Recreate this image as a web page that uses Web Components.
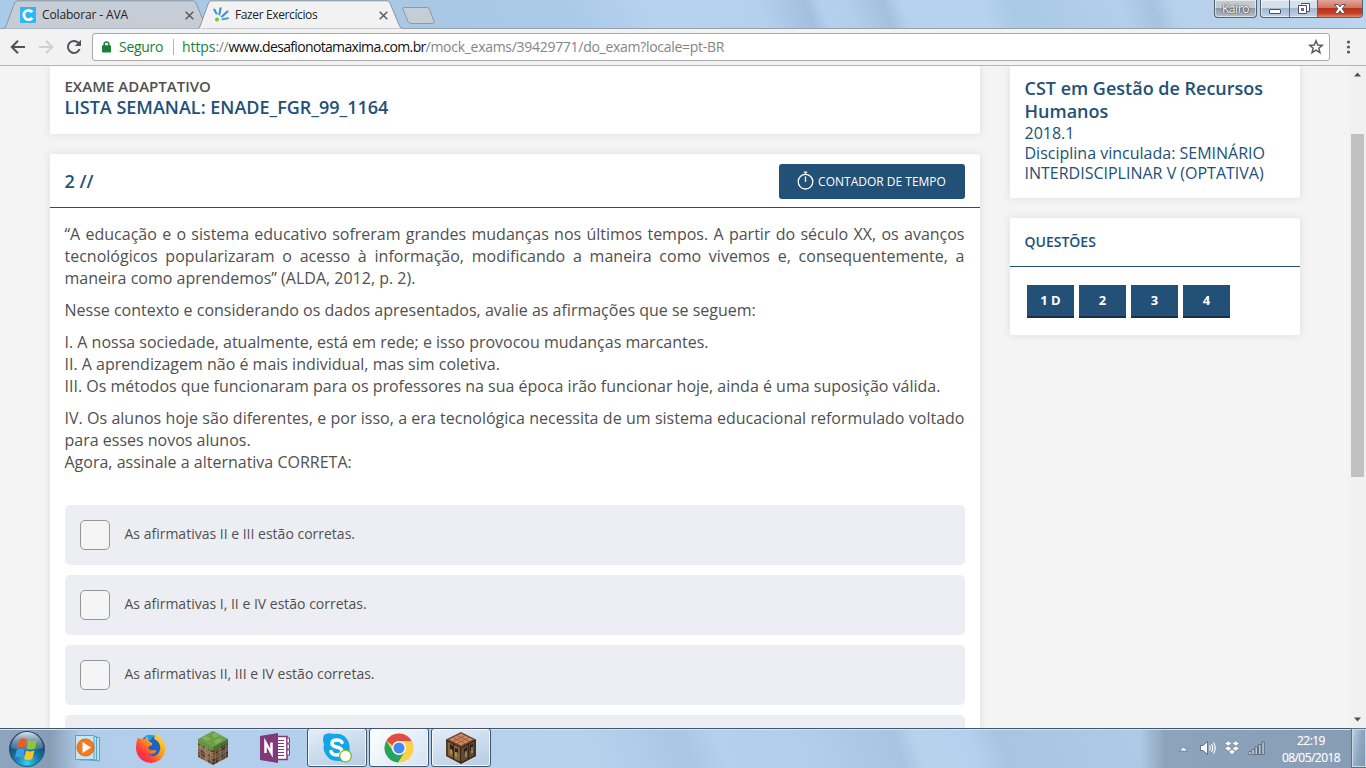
<!DOCTYPE html>
<html lang="pt-BR">
<head>
<meta charset="utf-8">
<title>Fazer Exercícios</title>
<style>
html,body{margin:0;height:100%;overflow:hidden}
body{width:1366px;height:768px;font-family:"Open Sans","Noto Sans",sans-serif}
</style>
</head>
<body>
<desktop-screen></desktop-screen>
<script>
const define=(name,html)=>customElements.define(name,class extends HTMLElement{
  constructor(){super();const t=document.createElement('template');t.innerHTML=html;
    this.attachShadow({mode:'open'}).appendChild(t.content.cloneNode(true));}
});

define('browser-tab',`<style>
:host{display:block;position:relative;width:204px;height:28px;flex:none}
svg.shape{position:absolute;left:0;top:0;display:block}
.row{position:relative;display:flex;align-items:center;height:28px;padding-left:20px;box-sizing:border-box;font:12px "Open Sans","Noto Sans",sans-serif;color:#222;letter-spacing:var(--ls,-.14px)}
:host .shape path{fill:var(--tab,#c6cdd5)}
.label{flex:1;padding-left:6px;white-space:nowrap;padding-top:1px}
.x{margin-right:14.500px;margin-top:2px}
::slotted(svg){display:block;flex:none;margin-top:1px}
</style>
<svg class="shape" width="204" height="29"><path d="M-1 28.5L1.5 27.5L10.5 3Q11.5.8 14 .8H188.500Q191 .8 192 3L201.500 26Q202.500 28.500 205 28.500" stroke="#8b949f"/></svg>
<div class="row"><slot name="icon"></slot><span class="label"><slot></slot></span>
<svg class="x" width="9" height="9" viewBox="0 0 9 9"><path d="M.7.7L8.300 8.300M8.300.7L.7 8.300" stroke="#5a5c5f" stroke-width="1.500"/></svg></div>`);

define('window-controls',`<style>
:host{display:flex;height:18px;gap:3px}
.b{box-sizing:border-box;height:18px;border:1px solid #55606f;border-top:0;border-radius:0 0 4px 4px;display:flex;overflow:hidden;box-shadow:inset 0 0 0 1px #ffffff90}
.user{width:43px;background:linear-gradient(#c3cad2 0 48%,#8f9aa6 50%,#b5c0cc);justify-content:center;font:12px/17px "Open Sans","Noto Sans",sans-serif;letter-spacing:-.4px;color:#fff;text-shadow:0 0 2px #333,0 0 1px #333}
.group{width:103px;background:linear-gradient(#d6e0ec 0 48%,#a5b8cf 50%,#c2d4e8)}
.c{display:grid;place-items:center;width:28px;border-right:1px solid #5a6678}
.c+.c{width:27px}
.c.close{flex:1;width:auto;border:0;background:linear-gradient(#e0a79c 0,#d0705e 47%,#b8321b 50%,#c5432a 80%,#e08d6a)}
svg{display:block}
</style>
<div class="b user">Kairo</div>
<div class="b group"><div class="c"><svg width="14" height="16"><rect x="1.500" y="8.500" width="11" height="4" rx=".5" fill="#fff" stroke="#4a5060"/></svg></div>
<div class="c"><svg width="14" height="16"><path d="M4.500 3.500V2.500H12.500V10.500H10" fill="#fff" stroke="#4a5060"/><path d="M1.500 4.500H9.500V12.500H1.500zM4.500 7.500V9.500H6.500V7.500z" fill="#fff" fill-rule="evenodd" stroke="#4a5060"/></svg></div>
<div class="c close"><svg width="14" height="16"><path d="M1.500 3.500H5L7 6L9 3.500H12.500L9.200 7.800L12.500 12.500H9L7 9.800L5 12.500H1.500L4.800 7.800z" fill="#fff" stroke="#555566"/></svg></div></div>`);

define('tab-strip',`<style>
:host{display:flex;padding-left:4px;background:linear-gradient(70deg,#a9cbe9 0,#a9c8e5 400px,#a9c9e6 530px,#b5d2ee 620px,#b3d1ed 720px,#a2c0de 765px,#b3d0ec 780px,#b1ceea 805px,#a3c0dd 838px,#b4d1ed 855px,#b5d2ee 930px,#a9c9e5 960px,#b2cfeb 1060px,#a5c3df 1090px,#b6d1ec 1110px,#bdd5ee 1300px);border-bottom:1px solid #97a2ae;position:relative;box-sizing:border-box;height:29px}
browser-tab+browser-tab{--tab:#f2f2f2;--ls:-.38px;margin-left:-10px;height:29px;z-index:1}
.new{margin:6px 0 0 -1px;display:block}
window-controls{margin-left:auto;margin-right:3px}
</style>
<browser-tab><svg slot="icon" style="margin-left:-4px" width="16" height="16" viewBox="0 0 16 16"><rect width="16" height="16" fill="#2bb8f5"/><path d="M12.300 5.200A4.700 4.700 0 1 0 12.300 10.800" fill="none" stroke="#fff" stroke-width="2.800"/></svg>Colaborar - AVA</browser-tab>
<browser-tab><svg slot="icon" style="margin-left:-5px" width="16" height="16" viewBox="0 0 16 16"><g fill="none" stroke="#2f8fd8" stroke-width="2" stroke-linecap="round"><path d="M1.200 2.500L3.500 6.500M7.600 1.200L6.300 7.500M14.500 4.500L9 9.500"/><path d="M9.500 12.300L15 11.300" stroke="#45a3df"/></g><circle cx="4" cy="12.500" r="2" fill="#76c442"/></svg>Fazer Exercícios</browser-tab>
<svg class="new" width="35" height="20"><path d="M3 1.500H26Q28 1.500 28.700 3.500L33 15.500Q33.500 17.500 31.500 17.500H10Q8 17.500 7 15.500L2 3.500Q1.500 1.500 3 1.500" fill="#c5cdd7" stroke="#8e99a6"/></svg>
<window-controls></window-controls>`);

define('address-bar',`<style>
:host{display:flex;align-items:center;height:37px;background:#f2f2f2;border-bottom:1px solid #b4b4b6;box-sizing:border-box;padding:0 0 1px 10px}
svg{display:block;flex:none}
.nav{display:flex;gap:12px;align-items:center}
.box{display:flex;align-items:center;box-sizing:border-box;width:1238px;height:28px;margin-left:10px;border:1px solid #a9a9ab;border-radius:3px;background:#fff;font:14px "Open Sans","Noto Sans",sans-serif;white-space:nowrap;padding-left:9px}
.s{color:#188038;margin-left:8px;letter-spacing:-.3px}
.sep{width:1px;height:16px;background:#b5b5b5;margin:0 8px 0 10px}
.u{color:#858585;letter-spacing:-.29px}.u b{font-weight:400;color:#188038;letter-spacing:-.1px}.u i{font-style:normal;color:#111;letter-spacing:-.66px}
.star{margin-left:auto;margin-right:5px}.menu{margin-left:14px}
</style>
<div class="nav"><svg width="16" height="16" viewBox="0 0 16 16"><path d="M15 8H2.500M8 1.800L1.800 8L8 14.200" fill="none" stroke="#505256" stroke-width="2"/></svg>
<svg width="16" height="16" viewBox="0 0 16 16"><path d="M1 8H13.500M8 1.800L14.200 8L8 14.200" fill="none" stroke="#d0d0d0" stroke-width="2"/></svg>
<svg width="16" height="16" viewBox="0 0 16 16"><path d="M13.600 10A6 6 0 1 1 12.400 3.900" fill="none" stroke="#505256" stroke-width="2"/><path d="M15 .8V7H8.800z" fill="#505256"/></svg></div>
<div class="box"><svg width="9" height="12" viewBox="0 0 9 12"><path d="M2.200 5V3Q2.200 1 4.500 1T6.800 3V5" fill="none" stroke="#188038" stroke-width="1.500"/><rect y="4.300" width="9" height="7.200" rx=".8" fill="#188038"/></svg>
<span class="s">Seguro</span><span class="sep"></span><span class="u"><b>https</b>://<i>www.desafionotamaxima.com.br</i>/mock_exams/39429771/do_exam?locale=pt-BR</span>
<svg class="star" width="16" height="16" viewBox="0 0 16 16"><path d="M8 1.700L9.700 6L14.300 6.300L10.800 9.200L12 13.700L8 11.200L4 13.700L5.200 9.200L1.700 6.300L6.300 6z" fill="none" stroke="#55585c" stroke-width="1.400"/></svg></div>
<svg class="menu" width="8" height="16"><g fill="#55585c"><circle cx="4.500" cy="3" r="1.600"/><circle cx="4.500" cy="8" r="1.600"/><circle cx="4.500" cy="13" r="1.600"/></g></svg>`);

define('content-card',`<style>:host{display:block;flex:none;background:#fff;border-radius:2px;box-shadow:0 0 8px rgba(0,0,0,.1);box-sizing:border-box}</style><slot></slot>`);

define('answer-option',`<style>
:host{display:flex;align-items:center;height:60px;box-sizing:border-box;padding-left:15px;background:#edeef4;border-radius:5px;font-size:14px;line-height:20px;color:#505050}
.box{width:30px;height:30px;box-sizing:border-box;border:1px solid #959595;border-radius:5px;background:#f5f5f5;margin-right:14.500px}
span{margin-top:-2px}
</style><div class="box"></div><span><slot></slot></span>`);

define('question-button',`<style>
:host{display:block;width:47px;height:33px;box-sizing:border-box;background:#225077;border-bottom:2px solid #1a2f45;color:#fff;font-weight:700;font-size:13px;line-height:31px;text-align:center}
</style><slot></slot>`);

define('timer-button',`<style>
:host{display:flex;align-items:center;justify-content:center;width:186px;height:35px;border-radius:3px;background:#225077;color:#fff;font-size:12px;gap:4px}
svg{display:block;margin:-3px 0 0 -1px}
</style><svg width="17" height="19" viewBox="0 0 17 19"><circle cx="8.500" cy="10.700" r="7.300" fill="none" stroke="#fff" stroke-width="1.300"/><path d="M8.500 .5V3.500M6.800 1.200H10.200M8.500 5.500V11" stroke="#fff" stroke-width="1.300"/></svg><span><slot></slot></span>`);

define('exam-page',`<style>
:host{display:flex;height:662px;background:#f4f4f4;overflow:hidden;font-family:"Open Sans","Noto Sans",sans-serif;color:#505050}
main{width:930px;margin-left:50px;flex:none;display:flex;flex-direction:column;gap:20px}
aside{width:290px;margin-left:30px;flex:none;display:flex;flex-direction:column;gap:20px;color:#225077}
.title{height:68px;padding:11px 14.500px 0;font-size:15px;line-height:19px}
.title h1{margin:0;font-size:18px;line-height:22px;font-weight:600;color:#225077}
.kicker{font-weight:600;font-stretch:100%}
.q{height:700px}
.head{display:flex;align-items:center;justify-content:space-between;height:54px;box-sizing:border-box;padding:0 15px 0 14.500px;border-bottom:1px solid #225077;color:#225077;font-weight:600;font-size:18px}
.text{padding:15px 15.500px 0 14.500px;font-size:16px;line-height:22px;text-align:justify;font-weight:400}
p{margin:0 0 10px}
.opts{display:flex;flex-direction:column;gap:10px;padding:22px 15px 0}
.course{height:132px;padding:11px 14.500px 0;font-size:16px;line-height:20px;white-space:nowrap}
h2{margin:0;font-size:18px;line-height:23px;font-weight:600}
.list{height:117px}
h3{margin:0;height:49px;box-sizing:border-box;padding:0 14.500px;font-size:14px;line-height:47px;font-weight:600;border-bottom:1px solid #225077}
.nums{display:flex;gap:5px;padding:18px 17px}
.bar{margin-left:auto;width:17px;background:#f1f1f1;display:flex;flex-direction:column;align-items:center}
.bar svg{display:block;flex:none;margin-top:6px}.thumb{width:13px;height:343px;background:#c1c1c1;margin-top:57px}
.bar .dn{margin-top:auto;margin-bottom:6px}
timer-button{font-weight:400;margin-top:2px}
</style>
<main>
<content-card class="title"><div class="kicker">EXAME ADAPTATIVO</div><h1>LISTA SEMANAL: ENADE_FGR_99_1164</h1></content-card>
<content-card class="q"><div class="head"><span>2 //</span><timer-button>CONTADOR DE TEMPO</timer-button></div>
<div class="text"><p>“A educação e o sistema educativo sofreram grandes mudanças nos últimos tempos. A partir do século XX, os avanços tecnológicos popularizaram o acesso à informação, modificando a maneira como vivemos e, consequentemente, a maneira como aprendemos” (ALDA, 2012, p. 2).</p>
<p>Nesse contexto e considerando os dados apresentados, avalie as afirmações que se seguem:</p>
<p>I. A nossa sociedade, atualmente, está em rede; e isso provocou mudanças marcantes.<br>II. A aprendizagem não é mais individual, mas sim coletiva.<br>III. Os métodos que funcionaram para os professores na sua época irão funcionar hoje, ainda é uma suposição válida.</p>
<p>IV. Os alunos hoje são diferentes, e por isso, a era tecnológica necessita de um sistema educacional reformulado voltado para esses novos alunos.<br>Agora, assinale a alternativa CORRETA:</p></div>
<div class="opts"><answer-option>As afirmativas II e III estão corretas.</answer-option><answer-option>As afirmativas I, II e IV estão corretas.</answer-option><answer-option>As afirmativas II, III e IV estão corretas.</answer-option><answer-option></answer-option></div></content-card>
</main>
<aside>
<content-card class="course"><h2>CST em Gestão de Recursos<br>Humanos</h2>2018.1<br>Disciplina vinculada: SEMINÁRIO<br>INTERDISCIPLINAR V (OPTATIVA)</content-card>
<content-card class="list"><h3>QUESTÕES</h3><div class="nums"><question-button>1 D</question-button><question-button>2</question-button><question-button>3</question-button><question-button>4</question-button></div></content-card>
</aside>
<div class="bar"><svg width="7" height="5"><path d="M0 4.500L3.500 .5L7 4.500z" fill="#505050"/></svg><div class="thumb"></div><svg class="dn" width="7" height="5"><path d="M0 .5L3.500 4.500L7 .5z" fill="#505050"/></svg></div>`);

define('task-item',`<style>
:host{display:grid;place-items:center;width:62px;height:40px;flex:none;box-sizing:border-box}
:host([open]){width:60px;margin:0 1px;height:39px;border:1px solid #43566d;border-radius:3px;box-shadow:inset 0 0 0 1px #f3f8fd;background:linear-gradient(160deg,#e5eef7 0,#cbdcee 50%,#b5cce4 100%)}
:host([active]){background:linear-gradient(135deg,#fff 0,#e8f1f9 50%,#d3e2f2 100%)}
::slotted(svg){display:block}
</style><slot></slot>`);

define('system-tray',`<style>
:host{display:flex;align-items:center;height:40px;color:#fff;font:12px/17px "Open Sans","Noto Sans",sans-serif}
svg{display:block;flex:none}
.clock{width:72px;text-align:center;padding-top:2px;letter-spacing:-.55px;margin:0 4px 0 10px;text-shadow:0 0 1px #fff6}
.show{width:15px;height:40px;box-sizing:border-box;border:1px solid #5c7087;border-right:0;box-shadow:inset 0 0 0 1px #c8d8e8;background:linear-gradient(100deg,#c2d2e2,#8fa8c2 50%,#7b96b4)}
</style>
<svg width="9" height="6" style="margin:2px 12px 0 0"><path d="M.5 5L4.500 1L8.500 5z" fill="#fff" stroke="#536578" stroke-width=".6"/></svg>
<svg width="17" height="16" viewBox="0 0 17 16"><path d="M.5 5.500H3L7.500 1.500V14.500L3 10.500H.5z" fill="#f5f8fa" stroke="#4f6073" stroke-width=".8"/><path d="M9.500 5.500Q11 8 9.500 10.500M11.500 4Q14 8 11.500 12M13.500 2.500Q17 8 13.500 13.500" fill="none" stroke="#fff" stroke-width="1.100"/></svg>
<svg width="16" height="16" viewBox="0 0 16 16" style="margin-left:7px"><g fill="#fff" stroke="#5c7086" stroke-width=".5"><path d="M4.500 1L8 3.500L4 6L.5 3.500zM11.500 1L15.500 3.500L12 6L8 3.500zM4 6L8 8.500L4.500 11L.5 8.500zM12 6L15.500 8.500L11.500 11L8 8.500zM8 9.300L11.500 11.800L8 14.500L4.500 11.800z"/></g></svg>
<svg width="17" height="14" viewBox="0 0 17 14" style="margin-left:8px"><g stroke="#4f6073" stroke-width=".8"><path fill="#fff" d="M1 10.500h2v3H1zM4 8.500h2v5H4z"/><path fill="#bccad6" d="M7 6h2.500v7.500H7zM10.500 3.500H13v10h-2.500zM13.800 1h2.500v12.500h-2.500z"/></g></svg>
<div class="clock">22:19<br>08/05/2018</div><div class="show"></div>`);

const grass=(n=6)=>{let s='',c=['#6b4a2f','#8a6142','#59402b','#77553a','#96704c'];
  for(let i=0;i<n;i++)for(let j=0;j<6;j++){const w=15/n,x=1+i*w,y=8+i*8/n+j*3;
    s+=`<path fill="${c[(i*3+j*2+i*j)%5]}" d="M${x} ${y}l${w} ${8/n}v3l${-w} ${-8/n}z"/>`;
    const a=16+i*w,b=16-i*8/n+j*3;s+=`<path fill="${c[(i*2+j*3+i*j)%5]}" style="filter:brightness(.75)" d="M${a} ${b}l${w} ${-8/n}v3l${-w} ${8/n}z"/>`;}
  return s;};

define('task-bar',`<style>
:host{display:flex;height:40px;box-sizing:border-box;background:linear-gradient(#43556a 0 1px,#d5e5f4 1px 2px,transparent 2px),linear-gradient(90deg,#8fa5bf 0,#879db6 50px,#8aa0ba00 82px,#8aa0ba00 1140px,#8da3bb 1165px,#879db4 1366px),linear-gradient(70deg,#b0cce9 0,#b6d2ed 560px,#a9c6e3 650px,#b3d0ec 685px,#b0cde9 770px,#a7c4e0 850px,#b6d2ed 870px,#b4d0ec 920px,#a7c4e0 950px,#aecae6 1080px)}
.start{width:58px;display:grid;place-items:center;padding-top:1px;box-sizing:border-box}
system-tray{margin-left:auto}
</style>
<div class="start"><svg style="margin-left:-4px" width="38" height="38" viewBox="0 0 38 38"><defs><radialGradient id="o" cx=".5" cy=".9" r=".8"><stop offset="0" stop-color="#2fd2f5"/><stop offset=".45" stop-color="#1476a8"/><stop offset="1" stop-color="#12395a"/></radialGradient><linearGradient id="g" x2="0" y2="1"><stop offset="0" stop-color="#e3edf5" stop-opacity=".95"/><stop offset="1" stop-color="#7d9fbc" stop-opacity=".35"/></linearGradient></defs><circle cx="19" cy="19" r="17.500" fill="url(#o)" stroke="#314f6d"/><path d="M3 18A16 16 0 0 1 35 18Q19 22 3 18" fill="url(#g)"/><path d="M11.500 9.500Q15 7 19 9.500L17 18Q13 16 9 18.200z" fill="#ee5a24"/><path d="M20.500 10Q25 12.300 29 10L27 18.500Q22.500 20.500 18.500 18.500z" fill="#8fc43c"/><path d="M8.700 20Q12.500 17.500 16.700 20L14.500 28.500Q11 26 6.800 28z" fill="#3aa0e6"/><path d="M18.200 20.500Q22 22.500 26.500 20.200L24.300 29Q20 31 16 29z" fill="#fcc41e"/></svg></div>
<task-item><svg width="30" height="30" viewBox="0 0 30 30"><g stroke="#5ba2c4" fill="#b9def0"><path d="M8 4.500H25.500V28L8 26z"/><path d="M5 3.500H22.500V27H5z"/><path d="M1.500 2.500H20V26.500H1.500z" fill="#c6e6f4"/></g><circle cx="11.500" cy="14.500" r="8.500" fill="#f47b20" stroke="#e06512"/><path d="M8.500 9L17 14.500L8.500 20z" fill="#fff"/></svg></task-item>
<task-item><svg width="32" height="32" viewBox="0 0 32 32"><defs><linearGradient id="f" x1="1" y2="1" x2="0"><stop offset="0" stop-color="#ffec3d"/><stop offset=".4" stop-color="#ffa21a"/><stop offset=".7" stop-color="#ff3b3b"/><stop offset="1" stop-color="#e3157c"/></linearGradient></defs><circle cx="16" cy="16" r="12.500" fill="#1b62c4"/><path d="M10 4Q16 1 22 5Q17 4 16 8L12 10z" fill="#18a5e8"/><path d="M3 5Q4 7 5 7Q7 6 10 7Q11 4 13 5Q12 8 15 10Q18 11 17 13L13 15Q14 19 19 18Q22 18 21 20Q17 24 12 21Q17 27 23 22Q27 17 24 11Q22 8 19 7Q20 3 21 1Q23 5 27 7Q32 14 30 20Q27 30 16 31Q3 30 1 17Q1 10 3 5" fill="url(#f)"/></svg></task-item>
<task-item><svg width="32" height="34" viewBox="0 0 32 34">${grass()}<path d="M1 8L16 0L31 8L16 16z" fill="#6f9e49"/><path d="M5 7L9 5L14 8L10 10zM15 3L19 2L22 5L17 7zM17 10L22 7L26 9L19 13z" fill="#82b45a"/><path d="M1 8L16 16V20L13.500 18V20L11 17V18.500L8.500 16V17L6 14V15.500L3.500 13V14L1 12z" fill="#629640"/><path d="M31 8L16 16V20L18.500 18V20L21 17V18.500L23.500 16V17L26 14V15.500L28.500 12V14L31 12z" fill="#47742e"/></svg></task-item>
<task-item><svg width="32" height="32" viewBox="0 0 32 32"><path d="M16 4.500H28V27.500H16z" fill="#fff" stroke="#80397b" stroke-width="1.500"/><path d="M28 6h2.500v5H28zM28 12h2.500v5H28zM28 18h2.500v5H28z" fill="#fff" stroke="#80397b"/><path d="M18 8.500h7M18 11.500h7M18 14.500h7M18 17.500h7M18 20.500h7M18 23.500h7" stroke="#80397b"/><path d="M1 4L19 1V31L1 28z" fill="#80397b"/><path d="M6.500 21V10.500L12.500 21V10.500" fill="none" stroke="#fff" stroke-width="2.500"/></svg></task-item>
<task-item open><svg width="32" height="32" viewBox="0 0 32 32"><path d="M3 3Q7 0 12 2Q24 0 28 11Q29 15 28.500 18Q31 24 27 28Q23 31 19 29Q7 30 3 19Q2 16 3 12Q1 7 3 3" fill="#12a5e8"/><path d="M21 10.500Q20 8 15.500 8Q11 8 11 11.500Q11 14 15.500 15Q21 16 21 19.500Q20.500 23 16 23Q11 23 10 19.500" fill="none" stroke="#fff" stroke-width="3.500" stroke-linecap="round"/><circle cx="24.500" cy="24" r="5.800" fill="#fff" stroke="#83bd22" stroke-width="1.300"/></svg></task-item>
<task-item open active><svg width="30" height="30" viewBox="0 0 30 30"><circle cx="15" cy="15" r="14.500" fill="#fcd04b"/><path d="M2.400 7.800A14.500 14.500 0 0 1 27.600 8H15A7 7 0 0 0 8.500 12.500z" fill="#dd4f43"/><path d="M2.400 7.800A14.500 14.500 0 0 0 14 29.500L21 18.500A7 7 0 0 1 9 18.500z" fill="#20a565"/><circle cx="15" cy="15" r="7" fill="#f4f4f4"/><circle cx="15" cy="15" r="5.500" fill="#4688f1"/></svg></task-item>
<task-item open><svg width="32" height="34" viewBox="0 0 32 34"><path d="M1 8.500L16 16V33L1 25z" fill="#876338"/><path d="M31 8.500L16 16V33L31 25z" fill="#65482a"/><path d="M1 8.500L16 1L31 8.500L16 16z" fill="#6d4428"/><path d="M4 8.500L16 2.500L28 8.500L16 14.500z" fill="#cf8963"/><path d="M8 6.500L20 12.500M12 4.500L24 10.500M8 10.500L20 4.500M12 12.500L24 6.500" stroke="#8f5233" stroke-width=".8"/><path d="M1 9L16 16.500L31 9M2 10V25M15.500 16V32M30 10V25M1.500 24.500L16 32L30.500 24.500M8.500 13V28M23.500 13V28" stroke="#35251a" stroke-width="1.200" fill="none"/><path d="M5 13l3 2v5l-3-2zM10 17l3 1v4l-3-1zM19 18l3-2v4l-3 2zM25 14l3-1v5l-3 2z" fill="#2b211a"/><path d="M6 18v5M11 21v5M21 20v6M27 16v6" stroke="#c6b487"/></svg></task-item>
<system-tray></system-tray>`);

define('desktop-screen',`<style>:host{display:flex;flex-direction:column;width:1366px;height:768px;overflow:hidden}
tab-strip,address-bar,exam-page,task-bar{flex:none}</style>
<tab-strip></tab-strip><address-bar></address-bar><exam-page></exam-page><task-bar></task-bar>`);
</script>
</body>
</html>
